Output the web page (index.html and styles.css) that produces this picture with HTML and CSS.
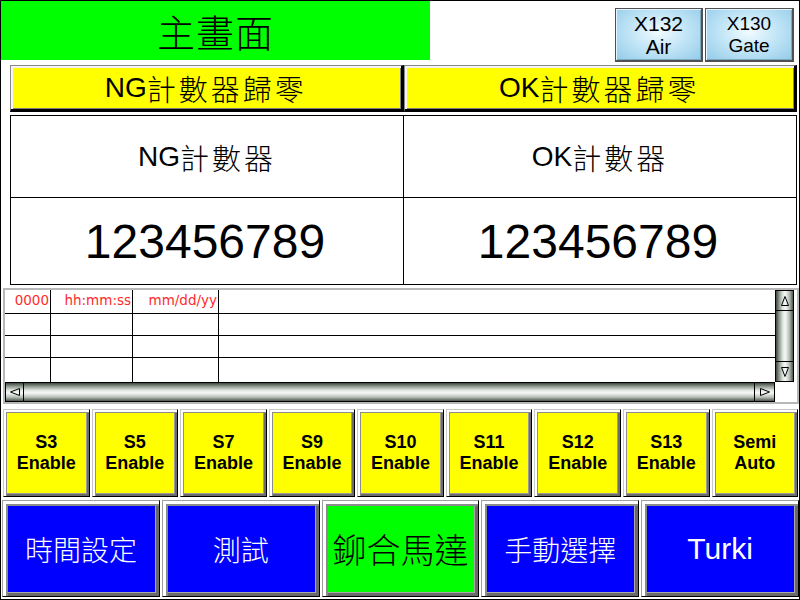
FILE: index.html
```html
<!DOCTYPE html>
<html>
<head>
<meta charset="utf-8">
<link rel="stylesheet" href="styles.css">
</head>
<body>
<div class="screen">
  <div class="top">
    <div class="title">主畫面</div>
    <div class="xbtns">
      <div class="xbtn x1">X132<br>Air</div>
      <div class="xbtn x2">X130<br>Gate</div>
    </div>
  </div>
  <div class="reset-row">
    <div class="ybtn"><span class="lat">NG</span>計數器歸零</div>
    <div class="ybtn"><span class="lat">OK</span>計數器歸零</div>
  </div>
  <div class="counters">
    <div class="cell label"><span class="lat">NG</span>計數器</div>
    <div class="cell label r"><span class="lat">OK</span>計數器</div>
    <div class="cell num">123456789</div>
    <div class="cell num r">123456789</div>
  </div>
  <div class="alarm">
    <div class="list">
      <div class="row head"><div>0000</div><div>hh:mm:ss</div><div>mm/dd/yy</div><div></div></div>
      <div class="row"><div></div><div></div><div></div><div></div></div>
      <div class="row"><div></div><div></div><div></div><div></div></div>
      <div class="row last"><div></div><div></div><div></div><div></div></div>
    </div>
    <div class="vscroll">
      <div class="arrow up"><svg width="10" height="12" viewBox="0 0 10 12"><polygon points="5,1.5 1.5,10.5 8.5,10.5" fill="none" stroke="#000" stroke-width="1"/></svg></div>
      <div class="vtrack"></div>
      <div class="arrow down"><svg width="10" height="12" viewBox="0 0 10 12"><polygon points="5,10.5 1.5,1.5 8.5,1.5" fill="none" stroke="#000" stroke-width="1"/></svg></div>
    </div>
    <div class="hscroll">
      <div class="arrow left"><svg width="12" height="10" viewBox="0 0 12 10"><polygon points="1.5,5 10.5,1.5 10.5,8.5" fill="none" stroke="#000" stroke-width="1"/></svg></div>
      <div class="htrack"></div>
      <div class="arrow right"><svg width="12" height="10" viewBox="0 0 12 10"><polygon points="10.5,5 1.5,1.5 1.5,8.5" fill="none" stroke="#000" stroke-width="1"/></svg></div>
    </div>
    <div class="corner"></div>
  </div>
  <div class="srow">
    <div class="sbtn">S3<br>Enable</div>
    <div class="sbtn">S5<br>Enable</div>
    <div class="sbtn">S7<br>Enable</div>
    <div class="sbtn">S9<br>Enable</div>
    <div class="sbtn">S10<br>Enable</div>
    <div class="sbtn">S11<br>Enable</div>
    <div class="sbtn">S12<br>Enable</div>
    <div class="sbtn">S13<br>Enable</div>
    <div class="sbtn">Semi<br>Auto</div>
  </div>
  <div class="brow">
    <div class="bbtn blue">時間設定</div>
    <div class="bbtn blue">測試</div>
    <div class="bbtn green">鉚合馬達</div>
    <div class="bbtn blue">手動選擇</div>
    <div class="bbtn blue lat-btn">Turki</div>
  </div>
</div>
</body>
</html>
```

FILE: styles.css
```css
html, body {
  margin: 0;
  padding: 0;
  background: #fff;
}

.screen {
  width: 800px;
  height: 600px;
  box-sizing: border-box;
  border: 1px solid #000;
  background: #fff;
  display: flex;
  flex-direction: column;
  font-family: "Liberation Sans", "Noto Sans CJK TC", sans-serif;
  color: #000;
  overflow: hidden;
}

/* top row */
.top {
  height: 64px;
  display: flex;
  flex-shrink: 0;
}

.title {
  width: 429px;
  height: 59px;
  background: #00ff00;
  display: flex;
  align-items: center;
  justify-content: center;
  font-family: "Noto Sans CJK TC", sans-serif;
  font-weight: 300;
  font-size: 38px;
  letter-spacing: 1px;
}

.xbtns {
  margin-left: auto;
  display: flex;
  gap: 2px;
  padding-top: 7px;
  padding-right: 5px;
}

.xbtn {
  height: 54px;
  box-sizing: border-box;
  border: 1px solid #505050;
  border-right-width: 2px;
  border-bottom-width: 2px;
  background: radial-gradient(ellipse at 50% 45%, #f2fbff 0%, #c4e6f7 45%, #92cbe9 100%);
  box-shadow: inset 1px 1px 0 #e8f6ff, inset -1px -1px 0 #7aa8c0;
  display: flex;
  align-items: center;
  justify-content: center;
  text-align: center;
}

.x1 {
  width: 88px;
  font-size: 21px;
  line-height: 23px;
}

.x2 {
  width: 89px;
  font-size: 19px;
  line-height: 22px;
}

/* reset buttons */
.reset-row {
  height: 47px;
  margin: 0 2px 0 9px;
  display: flex;
  flex-shrink: 0;
}

.ybtn {
  flex: 1;
  box-sizing: border-box;
  background: #ffff00;
  border-style: solid;
  border-width: 1px 3px 3px 1px;
  border-color: #888 #000 #000 #888;
  box-shadow: inset 2px 2px 0 #f4f4f4, inset -1px -1px 0 #808080;
  display: flex;
  align-items: center;
  justify-content: center;
  font-family: "Noto Sans CJK TC", sans-serif;
  font-weight: 300;
  font-size: 29px;
  letter-spacing: 3px;
}

.lat {
  font-family: "Liberation Sans", sans-serif;
  font-weight: normal;
  font-size: 28px;
  letter-spacing: 0;
}

/* counters */
.counters {
  height: 170px;
  margin: 3px 2px 0 9px;
  box-sizing: border-box;
  border: 1px solid #000;
  display: grid;
  grid-template-columns: 393px 1fr;
  grid-template-rows: 82px 1fr;
  flex-shrink: 0;
}

.cell {
  box-sizing: border-box;
  display: flex;
  align-items: center;
  justify-content: center;
}

.cell.label {
  border-bottom: 1px solid #000;
  font-family: "Noto Sans CJK TC", sans-serif;
  font-weight: 300;
  font-size: 29px;
  letter-spacing: 3px;
  padding-top: 0;
}

.cell.label:not(.r),
.cell.num:not(.r) {
  border-right: 1px solid #000;
}

.cell.num {
  font-size: 48px;
  padding-right: 4px;
}

/* alarm list */
.alarm {
  height: 116px;
  margin: 3px 0 0 2px;
  box-sizing: border-box;
  border: 2px solid #b8b8b8;
  display: grid;
  grid-template-columns: 770px 19px;
  grid-template-rows: 92px 20px;
  flex-shrink: 0;
}

.list {
  display: flex;
  flex-direction: column;
}

.row {
  display: grid;
  grid-template-columns: 46px 82px 86px 1fr;
  height: 22px;
  box-sizing: border-box;
  border-bottom: 1px solid #000;
}

.row.head {
  height: 24px;
}

.row.last {
  height: 24px;
  border-bottom: none;
}

.row > div {
  box-sizing: border-box;
  border-right: 1px solid #000;
}

.row > div:last-child {
  border-right: none;
}

.row.head > div {
  font-family: "DejaVu Sans", sans-serif;
  font-size: 13.5px;
  color: #ff2a2a;
  text-align: right;
  padding-right: 1px;
  line-height: 21px;
}

.vscroll {
  box-sizing: border-box;
  border: 1px solid #000;
  display: flex;
  flex-direction: column;
}

.vtrack {
  flex: 1;
  background: linear-gradient(to right, #3c443c 0%, #8c968c 18%, #dfe5df 40%, #f6f8f6 55%, #b8c0b8 78%, #4c544c 100%);
}

.hscroll {
  box-sizing: border-box;
  border: 1px solid #000;
  display: flex;
}

.htrack {
  flex: 1;
  background: linear-gradient(to bottom, #3c443c 0%, #8c968c 18%, #dfe5df 40%, #f6f8f6 55%, #b8c0b8 78%, #4c544c 100%);
}

.arrow {
  display: flex;
  align-items: center;
  justify-content: center;
  box-sizing: border-box;
}

.arrow.up,
.arrow.down {
  height: 20px;
  background: linear-gradient(to right, #3c443c 0%, #8c968c 18%, #dfe5df 40%, #f6f8f6 55%, #b8c0b8 78%, #4c544c 100%);
}

.arrow.up {
  border-bottom: 1px solid #000;
}

.arrow.down {
  border-top: 1px solid #000;
}

.arrow.left,
.arrow.right {
  background: linear-gradient(to bottom, #3c443c 0%, #8c968c 18%, #dfe5df 40%, #f6f8f6 55%, #b8c0b8 78%, #4c544c 100%);
}

.arrow.left {
  width: 18px;
  border-right: 1px solid #000;
}

.arrow.right {
  width: 20px;
  border-left: 1px solid #000;
}

.corner {
  background: #fff;
}

/* S buttons */
.srow {
  height: 88px;
  margin: 5px 1px 0 2px;
  display: flex;
  gap: 2px;
  flex-shrink: 0;
}

.sbtn {
  flex: 1;
  box-sizing: border-box;
  background: #ffff00;
  border: 1px solid;
  border-color: #c8c8c8 #000 #000 #c8c8c8;
  box-shadow: inset 2px 2px 0 #ffffff, inset 3px 3px 0 #8c8c8c, inset -2px -2px 0 #6c6c6c, inset -3px -3px 0 #9a9a9a;
  display: flex;
  align-items: center;
  justify-content: center;
  text-align: center;
  font-weight: bold;
  font-size: 18px;
  line-height: 21px;
}

/* bottom buttons */
.brow {
  height: 97px;
  margin: 3px 0 0 1px;
  display: flex;
  gap: 2px;
  flex-shrink: 0;
}

.bbtn {
  flex: 1;
  box-sizing: border-box;
  border: 1px solid;
  border-color: #a0a0a0 #000 #000 #a0a0a0;
  box-shadow: inset 3px 3px 0 #ffffff, inset 5px 5px 0 #8c8c8c, inset -3px -3px 0 #6a6a6a, inset -4px -4px 0 #a8a8a8;
  display: flex;
  align-items: center;
  justify-content: center;
  font-family: "Noto Sans CJK TC", sans-serif;
  font-weight: 300;
  font-size: 28px;
  color: #fff;
}

.bbtn.blue {
  background: #0000ff;
}

.bbtn.green {
  background: #00ff00;
  color: #000;
  font-size: 34px;
}

.bbtn.lat-btn {
  font-family: "Liberation Sans", sans-serif;
  font-weight: normal;
  font-size: 30px;
}
```
